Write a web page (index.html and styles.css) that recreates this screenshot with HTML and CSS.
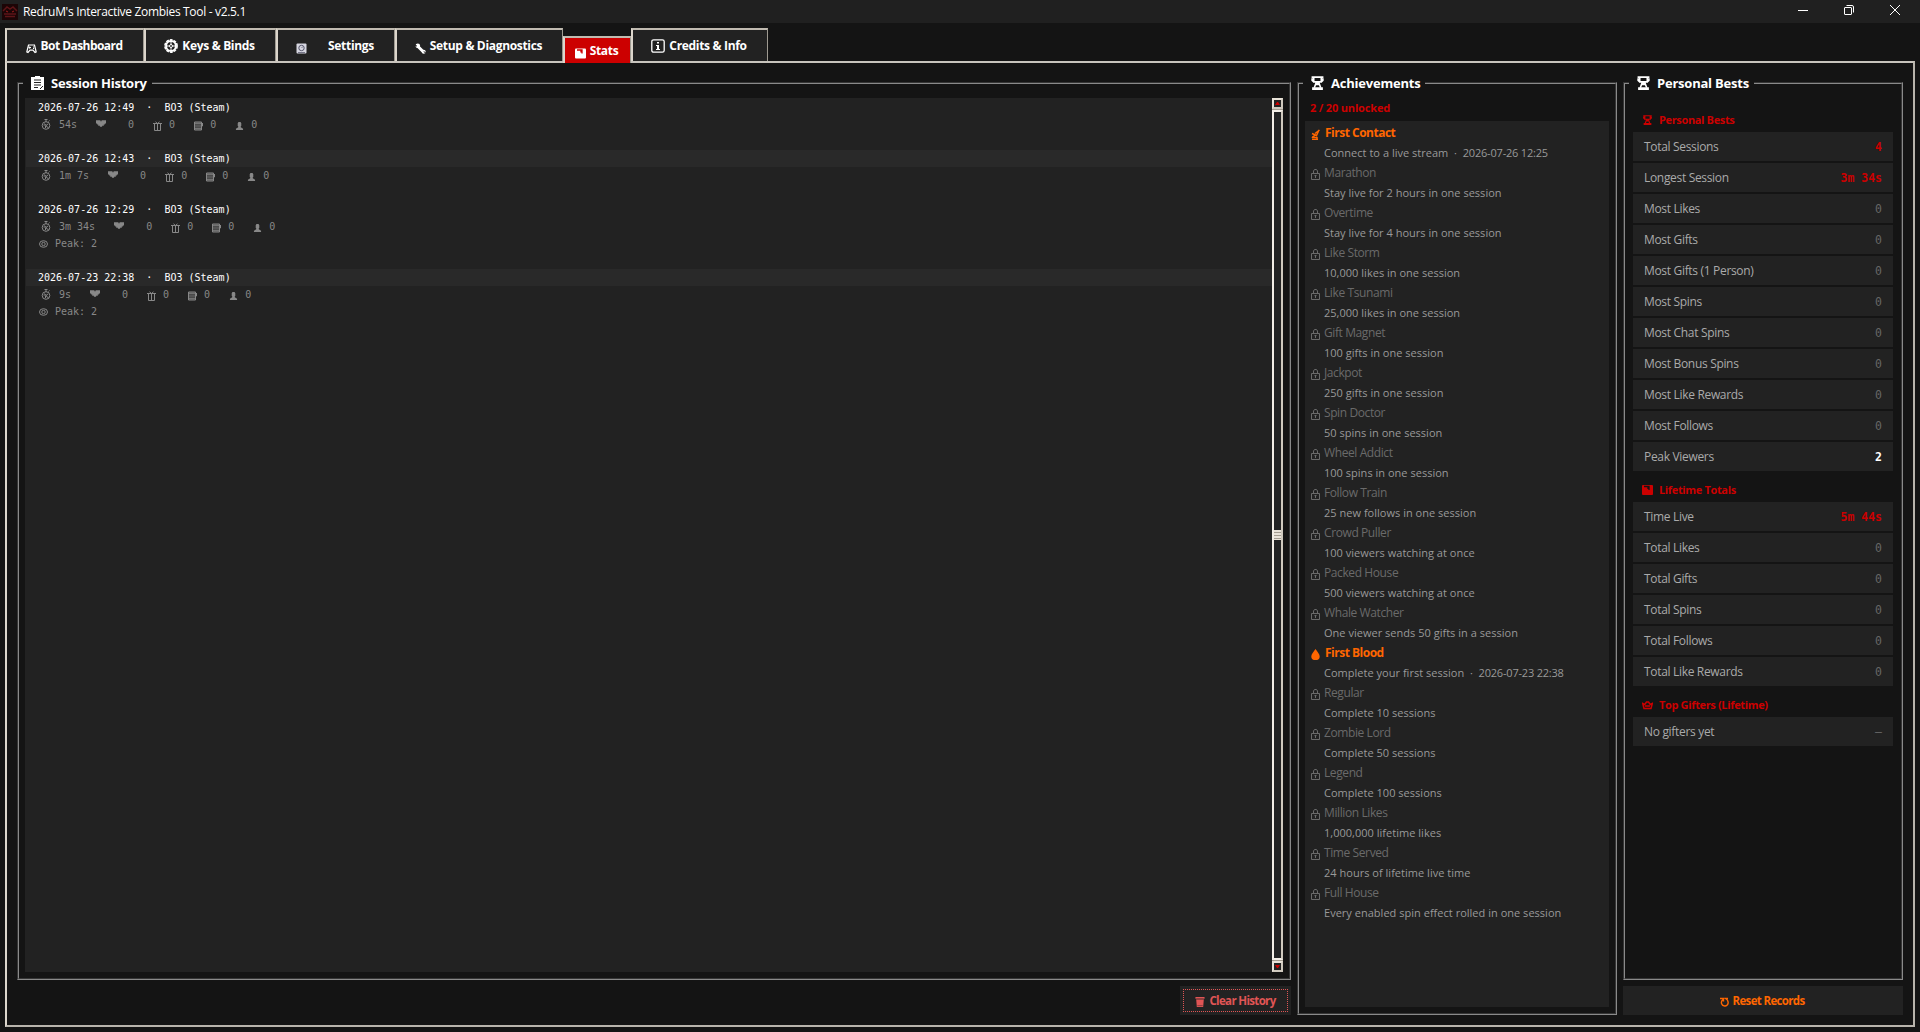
FILE: index.html
```html
<!DOCTYPE html>
<html lang="en">
<head>
  <meta charset="UTF-8">
  <meta name="viewport" content="width=device-width, initial-scale=1.0">
  <title>RedruM's Interactive Zombies Tool - v2.5.1</title>
  <link rel="stylesheet" href="styles.css">
</head>
<body>
  <!-- shared icons -->
  <svg class="sprite" width="0" height="0">
    <symbol id="i-gamepad" viewBox="0 0 11 10"><path d="M2.5 1.5h6l1.7 7-1.2.5-2-2.300h-3l-2 2.300-1.200-.5z" fill="none" stroke="currentColor" stroke-width="1.200"/><path d="M2.500 4h2.500M3.700 3v2.300M7 3.500h1M7 5h1" stroke="currentColor"/></symbol>
    <symbol id="i-gear" viewBox="0 0 14 14"><circle cx="7" cy="7" r="4.900" fill="none" stroke="currentColor" stroke-width="2"/><circle cx="7" cy="7" r="6.100" fill="none" stroke="currentColor" stroke-width="1.600" stroke-dasharray="2.800 1.030"/><circle cx="7" cy="7" r="1.500" fill="none" stroke="currentColor"/><path d="M7 2v3.500M7 8.500V12M2 7h3.500M8.500 7H12" stroke="currentColor"/></symbol>
    <symbol id="i-dial" viewBox="0 0 11 11"><rect x=".5" y=".5" width="10" height="10" rx="1" fill="#d6d6e0"/><circle cx="5.500" cy="5" r="2.700" fill="none" stroke="#55556a"/><path d="M5.500 5l1.500-1.500M2 9.500h7" stroke="#77778a"/></symbol>
    <symbol id="i-wrench" viewBox="0 0 11 11"><path d="M2.500 3l6 6" stroke="currentColor" stroke-width="3"/><circle cx="2.800" cy="2.800" r="2.300" fill="currentColor"/><circle cx="8.700" cy="8.700" r="2" fill="currentColor"/><path d="M0 2.500l2 .5M8.700 8.700l2 1" stroke="#212121"/></symbol>
    <symbol id="i-stats" viewBox="0 0 11 10"><rect width="11" height="10" rx="1" fill="currentColor"/><path d="M2 1.500h5v3.500M6 2v2" fill="none" stroke="var(--cut)" stroke-width="1.300"/></symbol>
    <symbol id="i-info" viewBox="0 0 14 14"><rect x=".8" y=".8" width="12.400" height="12.400" rx="1.800" fill="none" stroke="currentColor" stroke-width="1.300"/><path d="M6 3h2v1.600H6zM5 6h3v4h1v1H5v-1h1V7H5z" fill="currentColor"/></symbol>
    <symbol id="i-clipboard" viewBox="0 0 13 14"><path d="M0 1h4V0h5v1h4v13H0z" fill="currentColor"/><path d="M3 4h7M3 6.500h7M3 9h7M3 11.500h4" stroke="#222" stroke-width="1.200"/><path d="M9 13l3-3" stroke="#222"/></symbol>
    <symbol id="i-trophy" viewBox="0 0 12 13"><path d="M.500 1h11M2.500 1.500v4h7v-4M1 2v2l2 2M11 2v2L9 6M5 5.500L3 11M7 5.500L9 11" fill="none" stroke="currentColor" stroke-width="1.500"/><path d="M1 10.500h10V13H1zM4.500 5.500h3v3h-3z" fill="currentColor"/></symbol>
    <symbol id="i-watch" viewBox="0 0 9 11"><circle cx="4.500" cy="6.500" r="3.800" fill="none" stroke="currentColor"/><path d="M3 .5h3M4.500 1v2M7 2.500l1-1M4.500 6.500L6.500 5M2 6h2M4 9V7M6 8l1 .5M3 4.500l3 4" stroke="currentColor"/></symbol>
    <symbol id="i-heart" viewBox="0 0 9 6"><path d="M0 0h4v1h1V0h4v3H8v1H7v1H5.500v1h-2V5H2V4H1V3H0z" fill="currentColor"/></symbol>
    <symbol id="i-gift" viewBox="0 0 9 10"><path d="M0 2.500h9M1.500 3v6.500h6V3M4.500 2v7.500M4.500 2.500L2.500.8M4.500 2.500l2-1.700" fill="none" stroke="currentColor"/></symbol>
    <symbol id="i-slot" viewBox="0 0 9 9"><path d="M.500.500h7v8h-7zM7.500 4.500h1v-3M.500 4.500h7" fill="none" stroke="currentColor"/><path d="M0 1h8v2H0zM1 6h6v2H1z" fill="currentColor" opacity=".8"/></symbol>
    <symbol id="i-user" viewBox="0 0 8 9"><path d="M2.500 0h3v1H6v3.500h-.5V6L8 7.500V9H0V7.500L2.500 6V4.500H2V1h.5z" fill="currentColor"/></symbol>
    <symbol id="i-eye" viewBox="0 0 9 8"><ellipse cx="4.500" cy="4" rx="4" ry="3.300" fill="none" stroke="currentColor"/><circle cx="4.500" cy="4" r="1.700" fill="none" stroke="currentColor"/></symbol>
    <symbol id="i-lock" viewBox="0 0 9 11"><path d="M.5 4.500h8v6h-8zM2.500 4.500V2l1-1.500h2l1 1.500v2.500M4.500 6v3M3.500 6.500h2" fill="none" stroke="currentColor"/></symbol>
    <symbol id="i-dish" viewBox="0 0 9 11"><path d="M1 4.500l4.500 2L8 1M8.500 1L4 4.500M2 7v1.500h4v2M1 10.500h6M1 9l3-3" fill="none" stroke="currentColor" stroke-width="1.500"/></symbol>
    <symbol id="i-drop" viewBox="0 0 9 11"><path d="M4.500 0C6 2.500 8.700 5 8.700 7.200A4 3.800 0 0 1 .3 7.200C.3 5 3 2.500 4.500 0z" fill="currentColor"/></symbol>
    <symbol id="i-crown" viewBox="0 0 11 9"><path d="M.7 3l2 1L4.500 1.500h2L8.300 4l2-1L9 8H2zM3 5.500h5" fill="none" stroke="currentColor" stroke-width="1.500"/></symbol>
    <symbol id="i-trash" viewBox="0 0 10 11"><path d="M0 0h10v2H0zM.8 2.500h8.400L8.500 11h-7z" fill="currentColor"/><path d="M1 2.200h8M2 9.500h6" stroke="#222" stroke-width=".5"/></symbol>
    <symbol id="i-reset" viewBox="0 0 10 10"><path d="M0 1.500h3.500v3M3.300 2.200C1.500 3.500 1 5 1.600 6.700a3.400 3.400 0 0 0 6.600-.9c0-1.900-.9-3.300-2.700-4.300H8" fill="none" stroke="currentColor" stroke-width="1.400"/></symbol>
  </svg>

  <header class="titlebar">
    <svg class="app-icon" viewBox="0 0 16 16"><rect width="16" height="16" fill="#1c0506"/><path d="M1 7l4-4 3 2 3-2 4 4M2 10h12M3 12.500h10" fill="none" stroke="#5e1518" stroke-width="1.500"/><path d="M4 7l2 1M12 7l-2 1" stroke="#a01c1c"/></svg>
    <span class="title">RedruM's Interactive Zombies Tool - v2.5.1</span>
    <div class="window-btns">
      <svg viewBox="0 0 10 10"><path d="M0 5.500h10" stroke="#fff"/></svg>
      <svg viewBox="0 0 10 10"><path d="M.5 3Q.5 2.500 1 2.500h6q.5 0 .5.500v6q0 .5-.5.500H1Q.5 9.500.5 9zM2.500.5H8Q9.500.5 9.500 2v5.500" fill="none" stroke="#fff"/></svg>
      <svg viewBox="0 0 10 10"><path d="M0 0l10 10M10 0L0 10" stroke="#fff"/></svg>
    </div>
  </header>

  <nav class="tabs">
    <div class="tab tab-dashboard"><svg class="tab-icon low"><use href="#i-gamepad"/></svg>Bot Dashboard</div>
    <div class="tab tab-keys"><svg class="tab-icon big"><use href="#i-gear"/></svg>Keys &amp; Binds</div>
    <div class="tab tab-settings"><svg class="tab-icon low"><use href="#i-dial"/></svg>Settings</div>
    <div class="tab tab-setup"><svg class="tab-icon low"><use href="#i-wrench"/></svg>Setup &amp; Diagnostics</div>
    <div class="tab active"><svg class="tab-icon low"><use href="#i-stats"/></svg>Stats</div>
    <div class="tab tab-credits"><svg class="tab-icon big"><use href="#i-info"/></svg>Credits &amp; Info</div>
  </nav>

  <main class="pane">
    <section class="column">
      <fieldset class="frame history">
        <legend><svg class="legend-icon"><use href="#i-clipboard"/></svg>Session History</legend>
        <div class="history-list" id="history-list"></div>
        <div class="scrollbar">
          <div class="arrow"><svg viewBox="0 0 5 3"><path d="M0 3h5L3 0H2z" fill="#c00"/></svg></div>
          <div class="trough"><div class="thumb"></div></div>
          <div class="arrow"><svg viewBox="0 0 5 3"><path d="M0 0h5L3 3H2z" fill="#c00"/></svg></div>
        </div>
      </fieldset>
      <button class="btn clear-btn"><span><svg class="btn-icon"><use href="#i-trash"/></svg>Clear History</span></button>
    </section>

    <section class="column">
      <fieldset class="frame achievements">
        <legend><svg class="legend-icon"><use href="#i-trophy"/></svg>Achievements</legend>
        <div class="unlocked-count">2 / 20 unlocked</div>
        <div class="achievement-list" id="achievement-list"></div>
      </fieldset>
    </section>

    <section class="column">
      <fieldset class="frame bests">
        <legend><svg class="legend-icon"><use href="#i-trophy"/></svg>Personal Bests</legend>
        <div id="bests-list"></div>
      </fieldset>
      <button class="btn reset-btn"><svg class="btn-icon"><use href="#i-reset"/></svg>Reset Records</button>
    </section>
  </main>

  <script>
    const sessions = [
      { date: '2026-07-26 12:49', time: '54s' },
      { date: '2026-07-26 12:43', time: '1m 7s' },
      { date: '2026-07-26 12:29', time: '3m 34s', peak: 2 },
      { date: '2026-07-23 22:38', time: '9s', peak: 2 }
    ];

    const achievements = [
      ['First Contact', 'Connect to a live stream', '2026-07-26 12:25', 'dish'],
      ['Marathon', 'Stay live for 2 hours in one session'],
      ['Overtime', 'Stay live for 4 hours in one session'],
      ['Like Storm', '10,000 likes in one session'],
      ['Like Tsunami', '25,000 likes in one session'],
      ['Gift Magnet', '100 gifts in one session'],
      ['Jackpot', '250 gifts in one session'],
      ['Spin Doctor', '50 spins in one session'],
      ['Wheel Addict', '100 spins in one session'],
      ['Follow Train', '25 new follows in one session'],
      ['Crowd Puller', '100 viewers watching at once'],
      ['Packed House', '500 viewers watching at once'],
      ['Whale Watcher', 'One viewer sends 50 gifts in a session'],
      ['First Blood', 'Complete your first session', '2026-07-23 22:38', 'drop'],
      ['Regular', 'Complete 10 sessions'],
      ['Zombie Lord', 'Complete 50 sessions'],
      ['Legend', 'Complete 100 sessions'],
      ['Million Likes', '1,000,000 lifetime likes'],
      ['Time Served', '24 hours of lifetime live time'],
      ['Full House', 'Every enabled spin effect rolled in one session']
    ];

    const groups = [
      { name: 'Personal Bests', icon: 'trophy', rows: [
        ['Total Sessions', '4', 'red'], ['Longest Session', '3m 34s', 'red'], ['Most Likes', '0'],
        ['Most Gifts', '0'], ['Most Gifts (1 Person)', '0'], ['Most Spins', '0'], ['Most Chat Spins', '0'],
        ['Most Bonus Spins', '0'], ['Most Like Rewards', '0'], ['Most Follows', '0'], ['Peak Viewers', '2', 'white']
      ] },
      { name: 'Lifetime Totals', icon: 'stats', rows: [
        ['Time Live', '5m 44s', 'red'], ['Total Likes', '0'], ['Total Gifts', '0'],
        ['Total Spins', '0'], ['Total Follows', '0'], ['Total Like Rewards', '0']
      ] },
      { name: 'Top Gifters (Lifetime)', icon: 'crown', rows: [['No gifters yet', '–']] }
    ];

    function icon(name) {
      return `<svg class="icon icon-${name}"><use href="#i-${name}"/></svg>`;
    }

    document.getElementById('history-list').innerHTML = sessions.map(s => `
      <div class="session">
        <div class="session-head">${s.date}  ·  BO3 (Steam)</div>
        <div class="session-line">${icon('watch')}<span>${s.time}</span>${icon('heart')}<span>0</span>${icon('gift')}<span>0</span>${icon('slot')}<span>0</span>${icon('user')}<span>0</span></div>
        ${s.peak ? `<div class="session-line">${icon('eye')}<span>Peak: ${s.peak}</span></div>` : ''}
      </div>`).join('');

    document.getElementById('achievement-list').innerHTML = achievements.map(([name, text, date, ico]) => `
      <div class="achievement ${date ? 'unlocked' : ''}">
        <div class="achievement-name">${icon(ico || 'lock')}<span>${name}</span></div>
        <div class="achievement-text">${text}${date ? `  ·  <span class="achievement-date">${date}</span>` : ''}</div>
      </div>`).join('');

    document.getElementById('bests-list').innerHTML = groups.map(g => `
      <div class="group-name">${icon(g.icon)}<span>${g.name}</span></div>
      ${g.rows.map(([label, value, color]) => `
        <div class="stat-row"><span>${label}</span><span class="stat-value ${color || ''}">${value}</span></div>`).join('')}
      `).join('');
  </script>
</body>
</html>
```
FILE: styles.css
```css
* {
  box-sizing: border-box;
}

body {
  margin: 0;
  height: 100vh;
  overflow: hidden;
  display: flex;
  flex-direction: column;
  background-color: #141414;
  color: #fff;
  font-family: "Open Sans", sans-serif;
  font-size: 12px;
}

svg {
  display: block;
  flex: none;
}

.sprite {
  position: absolute;
}

/* title bar */
.titlebar {
  height: 23px;
  flex: none;
  display: flex;
  align-items: center;
  padding-left: 2px;
  background-color: #202020;
  letter-spacing: -0.32px;
}

.app-icon {
  width: 16px;
  height: 16px;
  margin-right: 5px;
}

.title {
  line-height: 22px;
}

.window-btns {
  margin-left: auto;
  padding-right: 20px;
  padding-bottom: 3px;
  display: flex;
  gap: 36px;
}

.window-btns svg {
  width: 10px;
  height: 10px;
}

/* tabs */
.tabs {
  height: 33px;
  flex: none;
  margin: 5px 0 0 5px;
  display: flex;
  align-items: flex-end;
}

.tab {
  height: 33px;
  display: flex;
  align-items: center;
  justify-content: center;
  gap: 4px;
  padding-right: 2px;
  background-color: #222;
  border: solid #dcd6cc;
  border-width: 2px 1px 0 2px;
  border-top-color: #c0bab0;
  border-right-color: #9e9a91;
  font-weight: bold;
  letter-spacing: -0.32px;
  white-space: nowrap;
}

.tab-dashboard {
  width: 139px;
  letter-spacing: -0.55px;
}

.tab-keys {
  width: 132px;
}

.tab-settings {
  width: 119px;
  gap: 21px;
}

.tab-setup {
  width: 168px;
}

.tab-credits {
  width: 137px;
}

.tab.active {
  --cut: #c00;
  width: 68px;
  height: 27px;
  margin-bottom: -2px;
  position: relative;
  background-color: #c00;
}

.tab-icon {
  width: 11px;
  height: 11px;
}

.tab-icon.big {
  width: 14px;
  height: 14px;
}

.tab-icon.low {
  margin-top: 5px;
}

/* main pane */
.pane {
  flex: 1;
  margin: 0 5px 5px;
  padding: 10px;
  border: 2px solid #dcd6cc;
  border-color: #c8c4bd #b8b4ac #b8b4ac #dcd6cc;
  display: grid;
  grid-template-columns: 1fr 320px 280px;
  gap: 6px;
  min-height: 0;
}

.column {
  display: flex;
  flex-direction: column;
  gap: 6px;
  min-height: 0;
}

.frame {
  flex: 1;
  min-width: 0;
  min-height: 0;
  margin: 0;
  border: 2px groove #8a8a8a;
  padding: 5px 6px 6px;
}

legend {
  height: 20px;
  margin-left: -2px;
  padding: 0 5px 0 8px;
  display: flex;
  align-items: center;
  gap: 7px;
  font-size: 13px;
  font-weight: bold;
  letter-spacing: -0.22px;
}

.legend-icon {
  width: 13px;
  height: 14px;
}

/* session history */
.history {
  display: flex;
}

.history-list {
  flex: 1;
  padding: 1px 0 0 1px;
  background-color: #222;
  font-family: "DejaVu Sans Mono", monospace;
  font-size: 10px;
}

.session {
  padding-bottom: 17px;
}

.session:nth-child(even) .session-head {
  background-color: #292929;
}

.session-head {
  height: 17px;
  line-height: 18px;
  padding-left: 12px;
  white-space: pre;
}

.session-line {
  height: 17px;
  line-height: 18px;
  padding-left: 13px;
  display: flex;
  align-items: center;
  color: #888;
}

.icon-watch {
  width: 10px;
  height: 11px;
  margin: 0 8px 0 2px;
}

.icon-heart {
  width: 10px;
  height: 7px;
  margin: 0 22px 2px 19px;
}

.icon-gift,
.icon-slot,
.icon-user {
  width: 9px;
  height: 10px;
  margin: 2px 7px 0 19px;
}

.icon-user {
  height: 8px;
}

.icon-eye {
  width: 9px;
  height: 8px;
  margin-right: 7px;
}

/* scrollbar */
.scrollbar {
  width: 11px;
  display: flex;
  flex-direction: column;
  gap: 1px;
  background-color: #a39c90;
}

.arrow {
  height: 11px;
  border: 2px solid #e8e2d8;
  border-color: #e8e2d8 #cfc9be #cfc9be #e8e2d8;
  background-color: #222;
  display: flex;
  align-items: center;
  justify-content: center;
}

.arrow svg {
  width: 5px;
  height: 3px;
}

.trough {
  flex: 1;
  display: flex;
  align-items: center;
  border: 2px solid #f3eee6;
  border-right-color: #cfc9be;
  background-color: #222;
}

.thumb {
  flex: 1;
  height: 10px;
  background: repeating-linear-gradient(#e8e2d8 0 2px, #a39c90 2px 3px);
}

/* buttons */
.btn {
  height: 29px;
  border: none;
  padding: 0;
  background-color: #222;
  display: flex;
  align-items: center;
  justify-content: center;
  gap: 4px;
  font-family: inherit;
  font-size: 11.5px;
  font-weight: bold;
  letter-spacing: -0.66px;
  cursor: pointer;
}

.btn-icon {
  width: 10px;
  height: 10px;
  margin-top: 2px;
}

.clear-btn {
  width: 111px;
  align-self: flex-end;
  color: #e05555;
}

.clear-btn span {
  width: 105px;
  height: 23px;
  border: 1px dotted #e05555;
  display: flex;
  align-items: center;
  justify-content: center;
  gap: 4px;
}

.reset-btn {
  padding-right: 2px;
  gap: 3px;
  color: #ff6600;
}

/* achievements */
.achievements {
  display: flex;
  flex-direction: column;
}

.unlocked-count {
  height: 23px;
  line-height: 20px;
  padding-left: 5px;
  color: #c00;
  font-size: 11px;
  font-weight: bold;
  letter-spacing: -0.17px;
}

.achievement-list {
  flex: 1;
  padding: 2px 0 0 6px;
  background-color: #222;
}

.achievement-name {
  height: 20px;
  display: flex;
  align-items: center;
  gap: 4px;
  line-height: 20px;
  color: #6a6a6a;
  letter-spacing: -0.4px;
}

.unlocked .achievement-name {
  color: #ff6600;
  font-weight: bold;
  letter-spacing: -0.5px;
  gap: 5px;
}

.achievement-text {
  height: 20px;
  line-height: 20px;
  padding-left: 13px;
  color: #999;
  font-size: 11px;
  letter-spacing: 0.02px;
  white-space: pre;
}

.achievement-date {
  letter-spacing: -0.2px;
}

.icon-lock,
.icon-dish,
.icon-drop {
  width: 9px;
  height: 11px;
  margin-top: 3px;
}

/* personal bests */
.bests {
  padding: 8px 8px 0;
}

.bests legend {
  margin-left: -4px;
}

.group-name {
  --cut: #141414;
  height: 31px;
  padding: 6px 0 0 9px;
  display: flex;
  align-items: center;
  gap: 6px;
  color: #c00;
  font-size: 11px;
  font-weight: bold;
  letter-spacing: -0.35px;
}

.group-name .icon {
  width: 11px;
  height: 10px;
  margin-top: 1px;
}

.stat-row {
  height: 29px;
  margin-bottom: 2px;
  padding: 0 11px;
  display: flex;
  align-items: center;
  justify-content: space-between;
  background-color: #222;
  color: #aaa;
  letter-spacing: -0.32px;
}

.stat-row:has(+ .group-name) {
  margin-bottom: 0;
}

.stat-value {
  color: #666;
  font-family: "DejaVu Sans Mono", monospace;
  font-size: 11.5px;
  letter-spacing: 0;
}

.stat-value.red {
  color: #c00;
  font-weight: bold;
}

.stat-value.white {
  color: #fff;
  font-weight: bold;
}
```
